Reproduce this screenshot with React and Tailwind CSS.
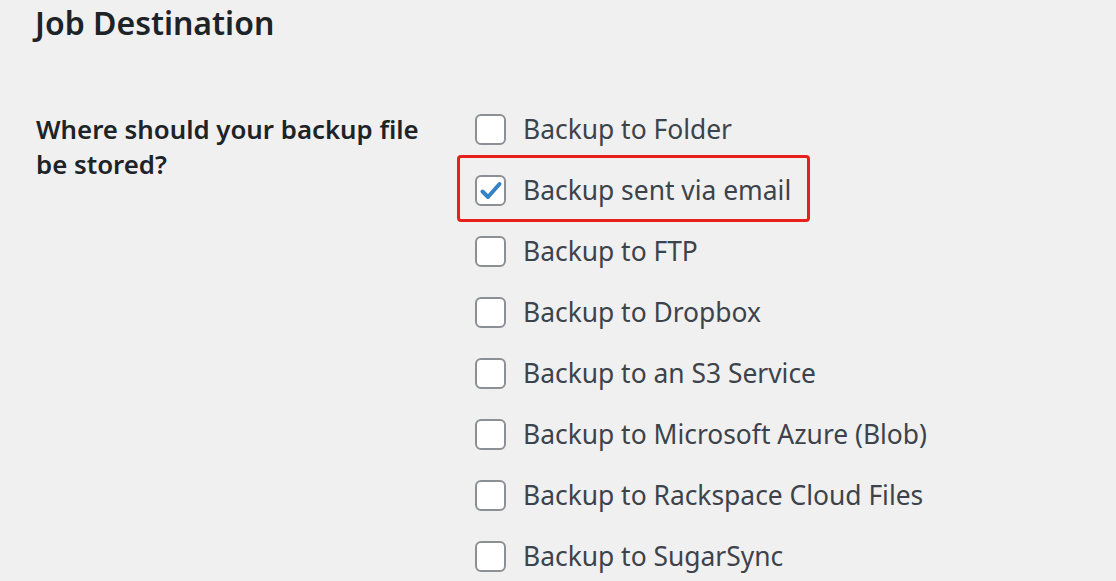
const options = [
  { label: 'Backup to Folder' },
  { label: 'Backup sent via email', checked: true, highlight: true },
  { label: 'Backup to FTP' },
  { label: 'Backup to Dropbox' },
  { label: 'Backup to an S3 Service' },
  { label: 'Backup to Microsoft Azure (Blob)' },
  { label: 'Backup to Rackspace Cloud Files' },
  { label: 'Backup to SugarSync' },
];

function Box({ checked }) {
  return (
    <span className="w-[31px] h-[31px] shrink-0 rounded-[6px] border-2 border-[#8c8f94] bg-white flex items-center justify-center">
      {checked && (
        <svg viewBox="0 0 24 24" className="w-[24px] h-[24px]">
          <path d="M3.5 12.5 L9 18 L20.5 5" fill="none" stroke="#3582c4" strokeWidth="4" strokeLinecap="round" strokeLinejoin="round" />
        </svg>
      )}
    </span>
  );
}

export default function App() {
  return (
    <div className="w-[1116px] h-[581px] overflow-hidden bg-[#f0f0f1] font-['Noto_Sans',sans-serif]">
      <h2 className="pl-[35px] pt-[1px] text-[32px] leading-[44px] font-semibold text-[#1d2327]">
        Job Destination
      </h2>
      <div className="flex mt-[54px]">
        <div className="w-[475px] shrink-0 pl-[36px] pr-[40px] pt-[13px] text-[25.8px] leading-[35px] font-semibold text-[#1d2327]">
          Where should your backup file be stored?
        </div>
        <div className="flex flex-col">
          {options.map(o => (
            <label key={o.label} className="relative h-[61px] flex items-center gap-[17px] text-[26.4px] text-[#3c434a]">
              {o.highlight && (
                <span className="absolute left-[-18px] top-[-5px] w-[353px] h-[67px] border-[3px] border-[#e8201c] rounded-[4px]" />
              )}
              <Box checked={o.checked} />
              <span>{o.label}</span>
            </label>
          ))}
        </div>
      </div>
    </div>
  );
}
